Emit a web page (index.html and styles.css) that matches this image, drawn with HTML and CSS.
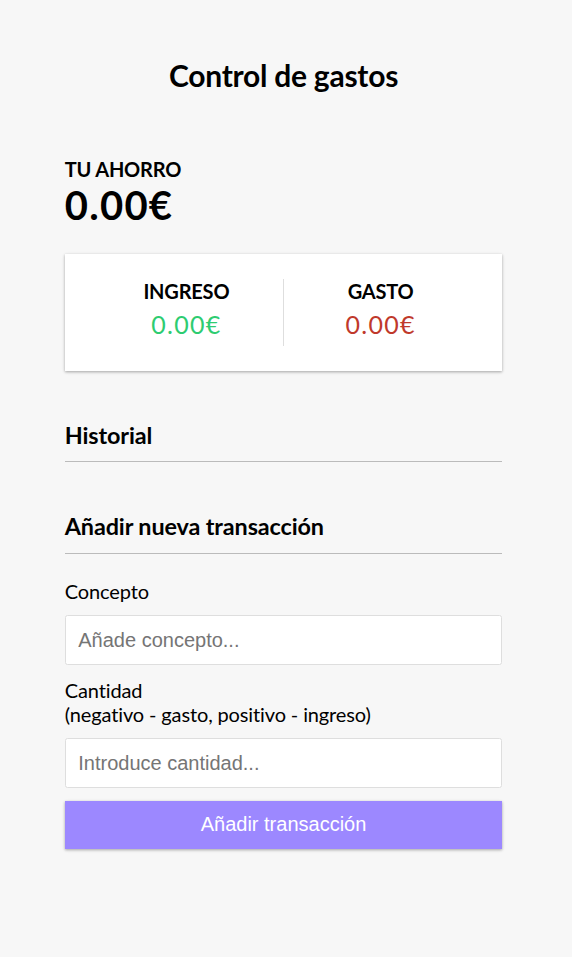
FILE: index.html
```html
<!DOCTYPE html>
<html lang="es">
<head>
<meta charset="UTF-8">
<title>Control de gastos</title>
<link rel="stylesheet" href="styles.css">
</head>
<body>
  <h2 class="title">Control de gastos</h2>
  <div class="container">
    <h4 class="caps">Tu ahorro</h4>
    <h1 class="balance">0.00€</h1>

    <div class="inc-exp">
      <div class="inc-exp-col">
        <h4 class="caps">Ingreso</h4>
        <p class="money plus">0.00€</p>
      </div>
      <div class="inc-exp-col">
        <h4 class="caps">Gasto</h4>
        <p class="money minus">0.00€</p>
      </div>
    </div>

    <h3 class="section-title">Historial</h3>
    <ul class="list"></ul>

    <h3 class="section-title">Añadir nueva transacción</h3>
    <form class="form">
      <div class="form-control">
        <label class="label" for="text">Concepto</label>
        <input class="field" type="text" id="text" placeholder="Añade concepto...">
      </div>
      <div class="form-control">
        <label class="label" for="amount">Cantidad <br>(negativo - gasto, positivo - ingreso)</label>
        <input class="field" type="text" id="amount" placeholder="Introduce cantidad...">
      </div>
      <button class="btn" type="button">Añadir transacción</button>
    </form>
  </div>
</body>
</html>
```

FILE: styles.css
```css
* {
  box-sizing: border-box;
}

body {
  background-color: #f7f7f7;
  display: flex;
  flex-direction: column;
  align-items: center;
  justify-content: center;
  min-height: 100vh;
  margin: 0;
  padding-right: 5px;
  font-family: Lato, "Noto Sans", sans-serif;
  color: #000;
}

.title {
  font-size: 30px;
  font-weight: 700;
  margin: 23px 0 27px;
  line-height: 36px;
  letter-spacing: -0.25px;
}

.container {
  margin: 37.5px auto;
  width: 437.5px;
}

.caps {
  margin: 0;
  font-size: 20px;
  line-height: 24px;
  font-weight: 700;
  text-transform: uppercase;
  letter-spacing: -0.2px;
}

.balance {
  font-size: 40px;
  line-height: 48px;
  font-weight: 700;
  letter-spacing: 1.25px;
  margin: 0;
}

.inc-exp {
  background-color: #fff;
  box-shadow: 0 1.25px 3.75px rgba(0, 0, 0, 0.12), 0 1.25px 2.5px rgba(0, 0, 0, 0.24);
  padding: 25px;
  display: flex;
  justify-content: space-between;
  margin: 25px 0;
}

.inc-exp-col {
  flex: 1;
  text-align: center;
}

.inc-exp-col:first-child {
  border-right: 1.25px solid #dedede;
}

.money {
  font-size: 25px;
  line-height: 30px;
  letter-spacing: 1.25px;
  margin: 6.25px 0;
}

.money.plus {
  color: #2ecc71;
}

.money.minus {
  color: #c0392b;
}

.section-title {
  font-size: 23.4px;
  line-height: 28px;
  font-weight: 700;
  letter-spacing: -0.12px;
  border-bottom: 1.25px solid #bbb;
  padding-bottom: 12.5px;
  margin: 50px 0 12.5px;
}

.list {
  list-style-type: none;
  padding: 0;
  margin: 20px 0 50px;
}

.form {
  margin: 0;
}

.label {
  display: inline-block;
  margin: 12.5px 0;
  font-size: 20px;
  line-height: 24px;
  letter-spacing: -0.13px;
}

.field {
  border: 1.25px solid #dedede;
  border-radius: 2.5px;
  display: block;
  font-family: "Liberation Sans", Arial, sans-serif;
  font-size: 20px;
  line-height: 23px;
  padding: 12.5px;
  width: 100%;
  background: #fff;
  color: #000;
  margin: 0;
}

.field::placeholder {
  color: #757575;
}

.btn {
  cursor: pointer;
  background-color: #9c88ff;
  box-shadow: 0 1.25px 3.75px rgba(0, 0, 0, 0.12), 0 1.25px 2.5px rgba(0, 0, 0, 0.24);
  color: #fff;
  border: 0;
  display: block;
  font-family: "Liberation Sans", Arial, sans-serif;
  font-size: 20px;
  line-height: 23px;
  margin: 12.5px 0 37.5px;
  padding: 12.5px;
  width: 100%;
}
```
